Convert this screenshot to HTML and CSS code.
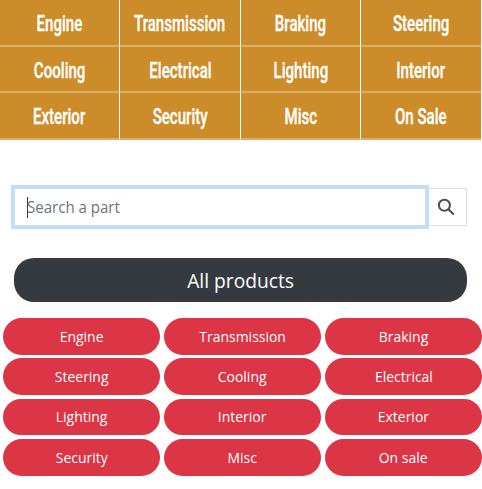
FILE: index.html
```html
<!DOCTYPE html>
<html lang="en">
<head>
<meta charset="utf-8">
<title>Parts</title>
<link rel="stylesheet" href="styles.css">
</head>
<body>
<nav class="menu">
<a><span>Engine</span></a><a><span>Transmission</span></a><a><span>Braking</span></a><a><span>Steering</span></a>
<a><span>Cooling</span></a><a><span>Electrical</span></a><a><span>Lighting</span></a><a><span>Interior</span></a>
<a><span>Exterior</span></a><a><span>Security</span></a><a><span>Misc</span></a><a><span>On Sale</span></a>
</nav>
<form class="search">
<div class="field"><i class="caret"></i><span>Search a part</span></div>
<div class="go"><svg width="18" height="18" viewBox="0 0 18 18"><circle cx="7.4" cy="7.2" r="5.5"/><path d="M11.4 11.2L16.2 16"/></svg></div>
</form>
<div class="all"><span>All products</span></div>
<div class="pills">
<a><span>Engine</span></a><a><span>Transmission</span></a><a><span>Braking</span></a>
<a><span>Steering</span></a><a><span>Cooling</span></a><a><span>Electrical</span></a>
<a><span>Lighting</span></a><a><span>Interior</span></a><a><span>Exterior</span></a>
<a><span>Security</span></a><a><span>Misc</span></a><a><span>On sale</span></a>
</div>
</body>
</html>
```
FILE: styles.css
```css
* { box-sizing: border-box; }
body { margin: 0; background: #fff; font-family: "Open Sans", "Noto Sans", sans-serif; overflow: hidden; }
span { display: block; white-space: nowrap; }
.menu { display: grid; width: 481px; grid-template-columns: 120px 121px 120px 120px; grid-template-rows: 47px 46px 47px; }
.menu a { display: flex; align-items: center; justify-content: center; background: #cb8c29; border-right: 1px solid #fff; border-bottom: 2px solid #dbae69; color: #fff; font: 500 22px/26px Roboto, sans-serif; padding-top: 2px; }
.menu a:nth-child(4n) { border-right: 0; }
.menu a:nth-child(n+5):nth-child(-n+8) { padding-top: 4px; }
.menu span { transform: scaleX(.685); -webkit-text-stroke: .35px #fff; }
.search { display: flex; margin: 48px 15px 0 14px; height: 38px; }
.field { position: relative; display: flex; align-items: center; width: 412px; border: 1px solid #d5dbe5; box-shadow: 0 0 0 3px #bfdeff; padding-left: 12px; color: #6c757d; font-size: 16px; background: #fff; }
.field span { transform: scaleX(.94); transform-origin: left; }
.caret { position: absolute; left: 12px; top: 8px; width: 1px; height: 21px; background: #343a40; }
.go { flex: 1; display: flex; align-items: center; justify-content: center; border: 1px solid #dee2e6; border-left: 0; }
.go svg { fill: none; stroke: #495057; stroke-width: 2; stroke-linecap: round; }
.all { display: flex; align-items: center; justify-content: center; margin: 32px 15px 0 14px; height: 44px; border-radius: 20px; background: #343a40; color: #fff; font-size: 20px; }
.all span { transform: scaleX(.96); }
.pills { display: grid; grid-template-columns: repeat(3, 157px); grid-auto-rows: 36.5px; gap: 3.85px 4px; margin: 16px 0 0 3px; }
.pills a { display: flex; align-items: center; justify-content: center; border-radius: 19px; background: #dc3545; color: #fff; font-size: 14.4px; }
.pills span { transform: scaleX(.97); }
```
